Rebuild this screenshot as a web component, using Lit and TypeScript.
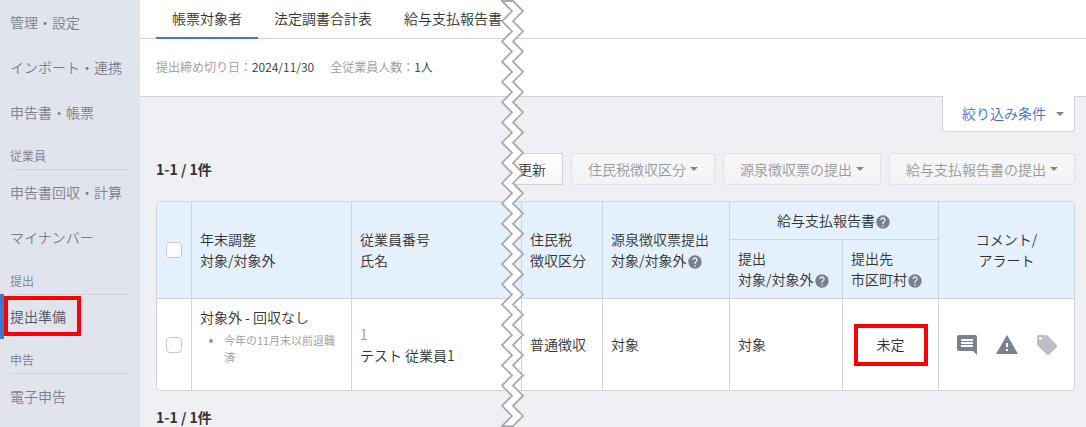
import { LitElement, html, svg, css } from "lit";
import { customElement } from "lit/decorators.js";
import { classMap } from "lit/directives/class-map.js";

interface NavEntry {
  label: string;
  heading?: boolean;
  active?: boolean;
}

const NAV: NavEntry[] = [
  { label: "管理・設定" },
  { label: "インポート・連携" },
  { label: "申告書・帳票" },
  { label: "従業員", heading: true },
  { label: "申告書回収・計算" },
  { label: "マイナンバー" },
  { label: "提出", heading: true },
  { label: "提出準備", active: true },
  { label: "申告", heading: true },
  { label: "電子申告" },
];

const TABS = ["帳票対象者", "法定調書合計表", "給与支払報告書"];
const ACTIONS = ["住民税徴収区分", "源泉徴収票の提出", "給与支払報告書の提出"];

@customElement("side-nav")
class SideNav extends LitElement {
  static styles = css`
    :host {
      display: block;
      background: #e1e4ec;
      color: #7b7f90;
    }
    .heading {
      margin: 0 10px;
      padding: 12px 0 4px;
      border-bottom: 1px solid #d1d4d8;
      font-size: 12px;
      line-height: 18px;
      font-weight: inherit;
    }
    .item {
      display: block;
      position: relative;
      padding: 12px 10px;
      font-size: 14px;
      line-height: 21px;
      color: inherit;
      text-decoration: none;
    }
    .active {
      margin-top: -1px;
      color: #50545f;
      box-shadow: inset 4px 0 #3c78d0;
    }
    .mark {
      position: absolute;
      inset: 2px auto auto 4px;
      box-sizing: border-box;
      width: 77px;
      height: 40px;
      border: 4px solid #f00;
    }
  `;

  render() {
    return html`<nav>
      ${NAV.map((e) =>
        e.heading
          ? html`<h2 class="heading">${e.label}</h2>`
          : html`<a href="#" class=${classMap({ item: true, active: !!e.active })}
              >${e.label}${e.active ? html`<span class="mark"></span>` : ""}</a
            >`
      )}
    </nav>`;
  }
}

@customElement("help-icon")
class HelpIcon extends LitElement {
  static styles = css`
    :host {
      display: inline-block;
      width: 16px;
      height: 16px;
      vertical-align: -4px;
    }
    svg {
      display: block;
      fill: #7b7f90;
    }
  `;

  render() {
    return html`<svg width="16" height="16" viewBox="0 0 24 24" aria-hidden="true">
      <path
        d="M12 2C6.48 2 2 6.48 2 12s4.480 10 10 10 10-4.480 10-10S17.520 2 12 2zm1 17h-2v-2h2v2zm2.070-7.750l-.9.920C13.450 12.900 13 13.500 13 15h-2v-.5c0-1.100.450-2.100 1.170-2.830l1.240-1.260c.370-.360.590-.860.590-1.410 0-1.100-.9-2-2-2s-2 .9-2 2H8c0-2.210 1.790-4 4-4s4 1.790 4 4c0 .880-.360 1.680-.930 2.250z"
      />
    </svg>`;
  }
}

const TEETH = 21;
const STEP = 10;

/* Torn strip: two parallel zigzag edges closed at both ends. */
function tearPoints(): string {
  const edge = (near: number, far: number) =>
    Array.from({ length: TEETH * 2 + 1 }, (_, i) => [
      i % 2 ? far : near,
      1 + (i * (STEP * 2 + 0.24)) / 2,
    ]);
  return [...edge(1, 11), ...edge(12, 22).reverse()]
    .map((p) => p.join(","))
    .join(" ");
}

@customElement("page-tear")
class PageTear extends LitElement {
  static styles = css`
    :host {
      display: block;
      pointer-events: none;
    }
    svg {
      display: block;
      fill: #fff;
      stroke: #aaa;
      stroke-width: 1.8;
    }
  `;

  render() {
    return html`<svg width="24" height="427" viewBox="0 0 24 427" aria-hidden="true">
      ${svg`<polygon points=${tearPoints()} />`}
    </svg>`;
  }
}

@customElement("app-root")
class AppRoot extends LitElement {
  static styles = css`
    :host {
      display: grid;
      grid-template-columns: 140px minmax(0, 1fr);
      position: relative;
      min-height: 100vh;
      background: #eff0f4;
      color: #333;
      font-family: "Noto Sans CJK JP", "Noto Sans", sans-serif;
      font-size: 14px;
      font-weight: 350;
      line-height: 21px;
    }
    .tabs {
      display: flex;
      padding-left: 16px;
      background: #fff;
      border-bottom: 1px solid #d1d3db;
    }
    .tab {
      padding: 8px 16px;
      margin-bottom: -1px;
      color: inherit;
      text-decoration: none;
      border-bottom: 2px solid transparent;
    }
    .tab.current {
      border-bottom-color: #3c78e0;
    }
    .info {
      display: flex;
      gap: 16px;
      padding: 19px 16px 20px;
      margin: 0;
      background: #fff;
      border-bottom: 1px solid #d1d3db;
      font-size: 12px;
      line-height: 18px;
    }
    .info div {
      display: flex;
    }
    .info dt {
      color: #999;
    }
    .info dd {
      margin: 0;
    }
    .content {
      padding: 0 11px 0 16px;
    }
    .filter-row {
      display: flex;
      justify-content: flex-end;
      margin-top: -1px;
    }
    button {
      display: flex;
      align-items: center;
      box-sizing: border-box;
      margin: 0;
      font: inherit;
      color: inherit;
      white-space: nowrap;
    }
    .filter {
      gap: 10px;
      height: 36px;
      padding: 0 10px 0 19px;
      background: #fff;
      border: 1px solid #d1d3db;
      border-top: 0;
      border-radius: 0 0 4px 4px;
      color: #3c74d0;
    }
    .caret {
      width: 0;
      height: 0;
      border: 4px solid transparent;
      border-top-color: #7b7f90;
      border-bottom: 0;
    }
    .toolbar {
      display: flex;
      justify-content: space-between;
      align-items: center;
      margin: 21px 0 16px;
    }
    .count {
      margin: 0;
      font-weight: 700;
      line-height: 20px;
    }
    .actions {
      display: flex;
      gap: 8px;
    }
    .action {
      gap: 4px;
      height: 32px;
      padding: 0 16px;
      border: 1px solid #d1d3db;
      border-radius: 4px;
      background: linear-gradient(#fff, #f6f6f8);
    }
    .action:disabled {
      border-color: #e0e1e7;
      background: linear-gradient(#f7f7f9, #f2f3f6);
      color: #999;
    }
    .action:disabled .caret {
      border-top-color: #888;
    }
    .update {
      padding-left: 5px;
      border-radius: 0;
    }
    table {
      width: 100%;
      table-layout: fixed;
      border: 1px solid #d1d3db;
      border-radius: 4px;
      border-collapse: separate;
      border-spacing: 0;
      background: #fff;
      overflow: hidden;
    }
    th,
    td {
      box-sizing: border-box;
      padding: 0 8px;
      border-right: 1px solid #d1d3db;
      font-weight: inherit;
      text-align: left;
      vertical-align: middle;
    }
    th {
      background: #e5f0fd;
      border-bottom: 1px solid #d1d3db;
    }
    .last {
      border-right: 0;
    }
    .center {
      text-align: center;
    }
    .head-top {
      height: 38px;
    }
    .head-sub {
      height: 59px;
    }
    .record {
      height: 91px;
    }
    .w-check {
      width: 35px;
    }
    .w-target {
      width: 160px;
    }
    .w-tax {
      width: 81px;
    }
    .w-slip {
      width: 127px;
    }
    .w-report {
      width: 113px;
    }
    .w-city {
      width: 96px;
    }
    .w-note {
      width: 135px;
    }
    .pick {
      padding: 0;
      text-align: center;
    }
    .pick input {
      appearance: none;
      display: block;
      box-sizing: border-box;
      width: 16px;
      height: 16px;
      margin: 0 auto;
      border: 1px solid #c4c7cc;
      border-radius: 4px;
      background: #fff;
    }
    .target {
      padding-top: 8px;
      vertical-align: top;
    }
    .reasons {
      margin: 4px 0 0;
      padding-left: 24px;
      color: #999;
      font-size: 11px;
      line-height: 17px;
    }
    .number {
      color: #999;
    }
    .city {
      position: relative;
    }
    .mark {
      position: absolute;
      inset: 0;
      margin: auto;
      box-sizing: border-box;
      width: 74px;
      height: 42px;
      border: 4px solid #f00;
    }
    .icons {
      display: flex;
      justify-content: center;
      gap: 16px;
    }
    .icons svg {
      display: block;
      fill: #7b7f90;
    }
    .icons .faint {
      fill: #bdbfc8;
    }
    .bottom {
      margin-top: 16px;
    }
    .tear {
      position: absolute;
      top: 0;
      left: 501px;
    }
  `;

  render() {
    return html`
      <side-nav></side-nav>
      <main>
        <nav class="tabs">
          ${TABS.map(
            (t, i) =>
              html`<a href="#" class=${classMap({ tab: true, current: i === 0 })}>${t}</a>`
          )}
        </nav>
        <dl class="info">
          <div><dt>提出締め切り日：</dt><dd>2024/11/30</dd></div>
          <div><dt>全従業員人数：</dt><dd>1人</dd></div>
        </dl>
        <div class="content">
          <div class="filter-row">
            <button class="filter" type="button">絞り込み条件<span class="caret"></span></button>
          </div>
          <div class="toolbar">
            <p class="count">1-1 / 1件</p>
            <div class="actions">
              <button class="action update" type="button">更新</button>
              ${ACTIONS.map(
                (a) =>
                  html`<button class="action" type="button" disabled>
                    ${a}<span class="caret"></span>
                  </button>`
              )}
            </div>
          </div>
          <table>
            <colgroup>
              <col class="w-check" />
              <col class="w-target" />
              <col />
              <col class="w-tax" />
              <col class="w-slip" />
              <col class="w-report" />
              <col class="w-city" />
              <col class="w-note" />
            </colgroup>
            <thead>
              <tr class="head-top">
                <th class="pick" rowspan="2"><input type="checkbox" aria-label="すべて選択" /></th>
                <th rowspan="2">年末調整<br />対象/対象外</th>
                <th rowspan="2">従業員番号<br />氏名</th>
                <th rowspan="2">住民税<br />徴収区分</th>
                <th rowspan="2">源泉徴収票提出<br />対象/対象外<help-icon></help-icon></th>
                <th class="center" colspan="2">給与支払報告書<help-icon></help-icon></th>
                <th class="center last" rowspan="2">コメント/<br />アラート</th>
              </tr>
              <tr class="head-sub">
                <th>提出<br />対象/対象外<help-icon></help-icon></th>
                <th>提出先<br />市区町村<help-icon></help-icon></th>
              </tr>
            </thead>
            <tbody>
              <tr class="record">
                <td class="pick"><input type="checkbox" aria-label="テスト 従業員1" /></td>
                <td class="target">
                  対象外 - 回収なし
                  <ul class="reasons">
                    <li>今年の11月末以前退職済</li>
                  </ul>
                </td>
                <td><span class="number">1</span><br />テスト 従業員1</td>
                <td>普通徴収</td>
                <td>対象</td>
                <td>対象</td>
                <td class="center city">未定<span class="mark"></span></td>
                <td class="last">
                  <div class="icons">
                    <svg width="24" height="24" viewBox="0 0 24 24" aria-hidden="true">
                      <path
                        d="M21.990 4c0-1.100-.890-2-1.990-2H4c-1.100 0-2 .9-2 2v12c0 1.100.9 2 2 2h14l4 4-.010-18zM18 14H6v-2h12v2zm0-3H6V9h12v2zm0-3H6V6h12v2z"
                      />
                    </svg>
                    <svg width="24" height="24" viewBox="0 0 24 24" aria-hidden="true">
                      <path d="M1 21h22L12 2 1 21zm12-3h-2v-2h2v2zm0-4h-2v-4h2v4z" />
                    </svg>
                    <svg class="faint" width="24" height="24" viewBox="0 0 24 24" aria-hidden="true">
                      <path
                        d="M21.410 11.580l-9-9C12.050 2.220 11.550 2 11 2H4c-1.100 0-2 .9-2 2v7c0 .550.220 1.050.590 1.420l9 9c.360.360.860.580 1.410.580.550 0 1.050-.220 1.410-.590l7-7c.370-.360.590-.860.590-1.410 0-.550-.230-1.060-.590-1.420zM5.500 7C4.670 7 4 6.330 4 5.500S4.670 4 5.500 4 7 4.670 7 5.500 6.330 7 5.500 7z"
                      />
                    </svg>
                  </div>
                </td>
              </tr>
            </tbody>
          </table>
          <p class="count bottom">1-1 / 1件</p>
        </div>
      </main>
      <page-tear class="tear"></page-tear>
    `;
  }
}
